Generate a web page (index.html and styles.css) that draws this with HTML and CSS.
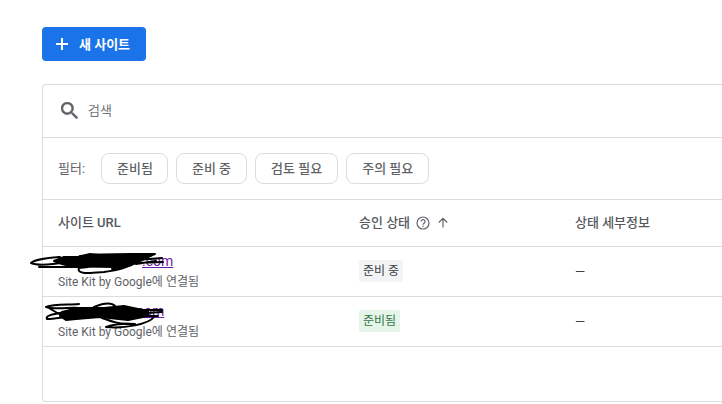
FILE: index.html
```html
<!DOCTYPE html>
<html lang="ko">
<head>
    <meta charset="UTF-8">
    <meta name="viewport" content="width=device-width, initial-scale=1.0">
    <title>사이트</title>
    <link rel="stylesheet" href="styles.css">
</head>
<body>

<main class="sites-page">
    <button type="button" class="new-site">
        <svg class="plus-icon" viewBox="0 0 14 14" aria-hidden="true"><path d="M7 1v12M1 7h12"/></svg>
        새 사이트
    </button>

    <section class="panel">
        <!-- Search -->
        <div class="search-bar">
            <label for="site-search" class="search-label" aria-label="검색">
                <svg class="search-icon" viewBox="3 3 17.5 17.5" aria-hidden="true"><path d="M15.5 14h-.79l-.28-.27A6.471 6.471 0 0 0 16 9.5 6.5 6.5 0 1 0 9.5 16c1.61 0 3.09-.59 4.23-1.57l.27.28v.79l5 4.99L20.49 19l-4.99-5zm-6 0C7.01 14 5 11.99 5 9.5S7.01 5 9.5 5 14 7.01 14 9.5 11.99 14 9.5 14z"/></svg>
            </label>
            <input id="site-search" class="search-input" type="search" placeholder="검색">
        </div>

        <!-- Filters -->
        <div class="filter-bar">
            <span class="filter-title">필터:</span>
            <button type="button" class="chip">준비됨</button>
            <button type="button" class="chip">준비 중</button>
            <button type="button" class="chip">검토 필요</button>
            <button type="button" class="chip">주의 필요</button>
        </div>

        <!-- Site list -->
        <table class="site-table">
            <thead>
                <tr>
                    <th class="col-url">사이트 URL</th>
                    <th class="col-status">
                        <span class="sort-head">
                            승인 상태
                            <svg class="help-icon" viewBox="0 0 14 14" aria-hidden="true"><circle cx="7" cy="7" r="6"/><path d="M5 5.600a2 2 0 1 1 3.300 1.500C7.500 7.700 7 8 7 8.800M7 9.800v1.200"/></svg>
                            <svg class="sort-icon" viewBox="0 0 10 11" aria-hidden="true"><path d="M5 10.500V1.500M.8 5.500L5 1.300l4.200 4.200"/></svg>
                        </span>
                    </th>
                    <th>상태 세부정보</th>
                </tr>
            </thead>
            <tbody>
                <tr>
                    <td>
                        <div class="site">
                            <a href="#" class="site-link">.com</a>
                            <svg class="scribble scribble-first" viewBox="0 0 150 30" aria-hidden="true">
                                <path class="blot" d="M34 8L48 8 60 5 80 7 108 6 122 6 112 11 98 17 82 18 62 17 40 17 32 15 24 12z"/>
                                <path d="M30 8C18 9 5 10 1 14 8 17 20 16 36 13M9 18C35 18 60 18 96 17M50 7C75 4 105 5 125 5 112 9 98 18 82 20M58 18L49 19C46 26 62 24 74 23 88 21 98 19 109 12M106 11L132 9M104 14L133 13M106 15L126 12"/>
                            </svg>
                        </div>
                        <p class="site-note">Site Kit by Google에 연결됨</p>
                    </td>
                    <td><span class="badge">준비 중</span></td>
                    <td>—</td>
                </tr>
                <tr>
                    <td>
                        <div class="site">
                            <a href="#" class="site-link site-link-short">.com</a>
                            <svg class="scribble scribble-second" viewBox="0 0 126 30" aria-hidden="true">
                                <path class="blot" d="M18 12L34 8 60 8 80 6 94 9 104 11 104 16 94 18 84 20 56 17 32 19 22 20 16 16z"/>
                                <path d="M35 4C24 5 10 4 2 7 10 10 28 7 34 8 24 14 0 13 3 19 14 19 26 15 38 17M3 7L22 18M50 7C60 3 67 2 71 6M80 10L118 10M86 14L118 12M84 16L114 16M58 18C70 22 72 24 91 24 76 23 68 25 62 27 80 29 105 24 110 17"/>
                            </svg>
                        </div>
                        <p class="site-note">Site Kit by Google에 연결됨</p>
                    </td>
                    <td><span class="badge badge-ready">준비됨</span></td>
                    <td>—</td>
                </tr>
            </tbody>
        </table>
        <div class="panel-footer"></div>
    </section>
</main>

</body>
</html>
```
FILE: styles.css
```css
* {
    box-sizing: border-box;
}
body {
    margin: 0;
    background-color: #ffffff;
    color: #3c4043;
    font-family: Roboto, "Noto Sans CJK KR", sans-serif;
    font-size: 13px;
}
.sites-page {
    padding: 27px 0 0 42px;
}
/* Primary button */
.new-site {
    display: flex;
    align-items: center;
    gap: 10px;
    height: 34px;
    padding: 0 16px 1px 13px;
    border: 0;
    border-radius: 4px;
    background-color: #1a73e8;
    color: #ffffff;
    font: inherit;
    font-weight: 700;
}
.plus-icon {
    width: 14px;
    height: 14px;
    fill: none;
    stroke: #ffffff;
    stroke-width: 2;
}
/* Panel runs to the right edge of the window */
.panel {
    margin-top: 23px;
    border: 1px solid #dadce0;
    border-right: 0;
    border-radius: 4px 0 0 4px;
}
.search-bar {
    display: flex;
    align-items: center;
    gap: 10px;
    height: 53px;
    padding: 0 18px 1px;
    border-bottom: 1px solid #dadce0;
}
.search-label {
    display: flex;
}
.search-icon {
    width: 17px;
    height: 17px;
    fill: #5f6368;
    stroke: #5f6368;
    stroke-width: 0.5;
}
.search-input {
    flex: 1;
    padding: 0;
    border: 0;
    outline: none;
    background: none;
    color: #3c4043;
    font: inherit;
}
.search-input::placeholder {
    color: #70757a;
}
/* Filter chips */
.filter-bar {
    display: flex;
    align-items: center;
    gap: 8px;
    height: 62px;
    padding: 0 15px;
    border-bottom: 1px solid #dadce0;
}
.filter-title {
    margin-right: 8px;
    padding-bottom: 3px;
    color: #5f6368;
}
.chip {
    height: 31px;
    padding: 0 14px 2px 15px;
    border: 1px solid #dadce0;
    border-radius: 8px;
    background-color: #ffffff;
    color: #5f6368;
    font: inherit;
    font-weight: 500;
}
.chip + .chip {
    padding-right: 15px;
}
/* Table */
.site-table {
    width: 100%;
    border-collapse: collapse;
    table-layout: fixed;
    text-align: left;
}
.site-table th {
    height: 46px;
    padding: 0 15px 3px;
    border-bottom: 1px solid #dadce0;
    color: #55595e;
    font-weight: 500;
}
.site-table td {
    height: 50px;
    padding: 0 15px;
    border-bottom: 1px solid #dadce0;
}
.col-url {
    width: 301px;
}
.col-status {
    width: 216px;
}
.sort-head {
    display: flex;
    align-items: center;
    gap: 6px;
}
.help-icon,
.sort-icon {
    margin-top: 3px;
    fill: none;
    stroke: #5f6368;
    stroke-width: 1.2;
}
.help-icon {
    width: 14px;
    height: 14px;
}
.sort-icon {
    width: 10px;
    height: 11px;
    margin-left: 2px;
}
.site {
    position: relative;
    height: 22px;
    line-height: 22px;
}
.site-link {
    padding-left: 84px;
    color: #681da8;
    font-size: 14px;
}
.site-link-short {
    padding-left: 75px;
}
.site-note {
    margin: 0;
    color: #5f6368;
    font-size: 12px;
    line-height: 20px;
}
/* Pen strokes drawn over the site address */
.scribble {
    position: absolute;
    height: 30px;
    fill: none;
    stroke: #000000;
    stroke-width: 2;
    stroke-linecap: round;
    stroke-linejoin: round;
}
.scribble .blot {
    fill: #000000;
}
.scribble-first {
    top: -1px;
    left: -28px;
    width: 150px;
}
.scribble-second {
    top: 0;
    left: -14px;
    width: 126px;
}
.badge {
    display: inline-block;
    padding: 0 4px;
    border-radius: 2px;
    background-color: #f1f3f4;
    font-size: 12px;
    line-height: 22px;
}
.badge-ready {
    background-color: #e6f4ea;
    color: #2f7a48;
}
.panel-footer {
    height: 54px;
}
```
